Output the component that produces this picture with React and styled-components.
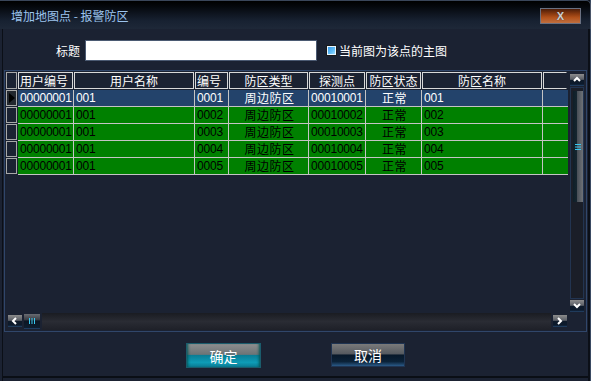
import React from 'react';
import styled, { createGlobalStyle } from 'styled-components';

const GlobalStyle = createGlobalStyle`
	html, body {
		margin: 0;
		padding: 0;
		background: #1b2232;
	}
	* {
		box-sizing: border-box;
	}
`;

const CJK = `"Noto Sans CJK SC", "Noto Sans", sans-serif`;
const LATIN = `"Liberation Sans", "Noto Sans CJK SC", sans-serif`;

const Window = styled.div`
	width: 591px;
	height: 381px;
	display: flex;
	flex-direction: column;
	background: #1b2232;
	font-family: ${CJK};
	font-size: 12px;
	color: #fff;
	box-shadow: inset 2px 0 0 #1b2232, inset 3px 0 0 #0b0f17, inset -1px 0 0 #3a4a62, inset -3px 0 0 #0b0f17,
		inset 0 -3px 0 #1b2232, inset 0 -5px 0 #0a0e15;
	overflow: hidden;
`;

const TitleBar = styled.div`
	height: 29px;
	flex: none;
	display: flex;
	align-items: flex-start;
	justify-content: space-between;
	padding: 0 9px 0 11px;
	background: linear-gradient(#000 0%, #05080d 20%, #172131 70%, #1e2838 100%);
	border-top: 1px solid #3a465a;
	border-right: 1px solid #4a5568;
	border-top-right-radius: 5px;
`;

const Title = styled.span`
	margin-top: 7px;
	font-size: 12px;
	line-height: 16px;
	color: #9cc4ee;
	white-space: nowrap;
`;

const CloseButton = styled.button`
	margin-top: 7px;
	width: 41px;
	height: 16px;
	padding: 0;
	border: 1px solid #6a7080;
	background: linear-gradient(#4a1c08 0%, #8a3a10 35%, #b0501a 60%, #c07040 100%);
	color: #d0d0d0;
	font-family: ${LATIN};
	font-weight: bold;
	font-size: 11px;
	line-height: 14px;
	text-shadow: 0 0 1px #333;
`;

const Content = styled.div`
	flex: 1;
	display: flex;
	flex-direction: column;
`;

const FormRow = styled.div`
	margin-top: 11px;
	height: 21px;
	display: flex;
	align-items: center;
	padding-left: 56px;
`;

const FieldLabel = styled.span`
	width: 29px;
	line-height: 16px;
	white-space: nowrap;
`;

const TextInput = styled.input`
	width: 232px;
	height: 21px;
	border: 1px solid #4b5a72;
	background: #fff;
	margin: 0 9px 0 0;
	padding: 0 3px;
`;

const CheckLabel = styled.label`
	display: flex;
	align-items: center;
	gap: 2px;
	white-space: nowrap;
	line-height: 16px;
`;

const CheckBox = styled.span`
	width: 11px;
	height: 11px;
	border: 1px solid #1a1a1a;
	box-shadow: inset 0 0 0 1px #e8f6ff;
	background: linear-gradient(135deg, #2f8fe8 0%, #62c0f8 60%, #b8e8ff 100%);
`;

const Grid = styled.div`
	margin: 9px 0 0 4px;
	width: 583px;
	height: 262px;
	border: 1px solid #30466a;
	padding: 1px;
	display: grid;
	grid-template-columns: 562px 1fr;
	grid-template-rows: 1fr 18px;
`;

const Table = styled.div`
	display: flex;
	flex-direction: column;
`;

const Row = styled.div`
	display: flex;
	height: 17px;
	margin-bottom: ${(p) => (p.$header ? '1px' : '0')};
`;

const Indicator = styled.div`
	width: 12px;
	flex: none;
	padding-right: 1px;
	padding-bottom: ${(p) => (p.$header ? '0' : '1px')};
	display: flex;
	& > span {
		flex: 1;
		border: 1px solid #a8a8a8;
		background: ${(p) => (p.$active ? '#22272e' : '#1b2232')};
		display: flex;
		align-items: center;
		justify-content: center;
	}
`;

const HeadCell = styled.div`
	width: ${(p) => p.$w}px;
	flex: none;
	padding-right: 1px;
	display: flex;
	& > span {
		flex: 1;
		border: 1px solid #d8d8d8;
		border-right-color: ${(p) => (p.$open ? 'transparent' : '#d8d8d8')};
		font-size: 12px;
		line-height: 15px;
		text-align: ${(p) => p.$align};
		padding: 0 1px;
		white-space: nowrap;
		overflow: hidden;
	}
`;

const Cell = styled.div`
	width: ${(p) => p.$w}px;
	flex: none;
	background: ${(p) => p.$bg};
	color: ${(p) => p.$color};
	border-right: ${(p) => (p.$last ? '0' : '1px solid #c4c4c4')};
	border-bottom: 1px solid #c4c4c4;
	font-family: ${(p) => (p.$cjk ? CJK : LATIN)};
	font-size: 12px;
	line-height: 16px;
	letter-spacing: ${(p) => (p.$cjk ? '0.5px' : '-0.2px')};
	text-align: ${(p) => p.$align};
	padding: 0 0 0 2px;
	white-space: nowrap;
	overflow: hidden;
`;

const VScroll = styled.div`
	margin: 2px 1px 0 2px;
	display: flex;
	flex-direction: column;
`;

const ScrollBtn = styled.div`
	width: ${(p) => p.$w || 14}px;
	height: 12px;
	flex: none;
	display: flex;
	align-items: center;
	justify-content: center;
	background: linear-gradient(#8c8c8c 0%, #5a5e66 45%, #0e1a2a 50%, #0c1a2c 85%, #27486e 100%);
`;

const VTrack = styled.div`
	flex: 1;
	margin: 1px 0;
	border: 1px solid #223450;
	background: #1a1e28;
	padding: 3px 0 0 2px;
`;

const VThumb = styled.div`
	height: 111px;
	display: flex;
	align-items: center;
	justify-content: center;
	background: linear-gradient(90deg, #0e1e28 0%, #14242e 35%, #4a5058 45%, #6e7278 100%);
`;

const HScroll = styled.div`
	display: flex;
	align-items: center;
	padding: 0 1px 0 2px;
	gap: 2px;
`;

const HThumb = styled.div`
	width: 16px;
	height: 15px;
	display: flex;
	align-items: center;
	justify-content: center;
	background: linear-gradient(#6a6c72 0%, #3a3e46 40%, #0c1624 50%, #0e1e30 100%);
	border-bottom: 1px solid #1f3c60;
`;

const HTrack = styled.div`
	flex: 1;
	height: 17px;
	background: linear-gradient(#1a1c22 0%, #2a2c34 50%, #1e2028 100%);
`;

const Footer = styled.div`
	margin-top: 11px;
	display: flex;
	align-items: flex-start;
	padding-left: 186px;
	gap: 70px;
`;

const DialogButton = styled.button`
	width: ${(p) => p.$w}px;
	height: ${(p) => p.$h}px;
	padding: 0;
	font-family: ${CJK};
	font-size: 14px;
	line-height: 18px;
	color: #fff;
	border: 1px solid ${(p) => (p.$primary ? '#1b5c6c' : '#1f3452')};
	background: ${(p) =>
		p.$primary
			? 'linear-gradient(#8e8e8e 0%, #6c7476 45%, #0a7e96 50%, #0e9cb6 80%, #0a7a92 100%)'
			: 'linear-gradient(#7a7a7a 0%, #555a60 45%, #07182a 50%, #0b2238 80%, #2a5a88 100%)'};
	box-shadow: ${(p) => (p.$primary ? 'inset 3px 0 3px -2px #055, inset -3px 0 3px -2px #055' : 'none')};
`;

function Chevron({ dir }) {
	const pts = {
		up: '1,5 4,2 7,5',
		down: '1,2 4,5 7,2',
		left: '5,1 2,4 5,7',
		right: '2,1 5,4 2,7',
	}[dir];
	return (
		<svg width="8" height="8" viewBox="0 0 8 8">
			<polyline points={pts} fill="none" stroke="#fff" strokeWidth="2" />
		</svg>
	);
}

function Grip({ vertical }) {
	return vertical ? (
		<svg width="6" height="6" viewBox="0 0 6 6">
			<rect x="0" y="0" width="6" height="1" fill="#38c8f0" />
			<rect x="0" y="2.5" width="6" height="1" fill="#38c8f0" />
			<rect x="0" y="5" width="6" height="1" fill="#38c8f0" />
		</svg>
	) : (
		<svg width="6" height="6" viewBox="0 0 6 6">
			<rect x="0" y="0" width="1" height="6" fill="#38c8f0" />
			<rect x="2.5" y="0" width="1" height="6" fill="#38c8f0" />
			<rect x="5" y="0" width="1" height="6" fill="#38c8f0" />
		</svg>
	);
}

const columns = [
	{ key: 'uid', title: '用户编号', w: 56, head: 'left', align: 'left' },
	{ key: 'uname', title: '用户名称', w: 121, head: 'center', align: 'left' },
	{ key: 'no', title: '编号', w: 34, head: 'left', align: 'left' },
	{ key: 'type', title: '防区类型', w: 80, head: 'center', align: 'center', cjk: true },
	{ key: 'point', title: '探测点', w: 57, head: 'center', align: 'left' },
	{ key: 'state', title: '防区状态', w: 56, head: 'center', align: 'center', cjk: true },
	{ key: 'name', title: '防区名称', w: 121, head: 'center', align: 'left' },
	{ key: 'blank', title: '', w: 25, head: 'center', align: 'left', open: true },
];

const rows = [1, 2, 3, 4, 5].map((n) => ({
	uid: '00000001',
	uname: '001',
	no: `000${n}`,
	type: '周边防区',
	point: `0001000${n}`,
	state: '正常',
	name: `00${n}`,
	blank: '',
}));

export default function App() {
	return (
		<>
			<GlobalStyle />
			<Window>
				<TitleBar>
					<Title>增加地图点 - 报警防区</Title>
					<CloseButton>X</CloseButton>
				</TitleBar>
				<Content>
					<FormRow>
						<FieldLabel>标题</FieldLabel>
						<TextInput />
						<CheckLabel>
							<CheckBox />
							当前图为该点的主图
						</CheckLabel>
					</FormRow>
					<Grid>
						<Table>
							<Row $header>
								<Indicator $header>
									<span />
								</Indicator>
								{columns.map((c) => (
									<HeadCell key={c.key} $w={c.w} $align={c.head} $open={c.open}>
										<span>{c.title}</span>
									</HeadCell>
								))}
							</Row>
							{rows.map((r, i) => {
								const selected = i === 0;
								return (
									<Row key={i}>
										<Indicator $active={selected}>
											<span>
												{selected && (
													<svg width="6" height="10" viewBox="0 0 6 10">
														<polygon points="0,0 6,5 0,10" fill="#000" />
													</svg>
												)}
											</span>
										</Indicator>
										{columns.map((c, j) => (
											<Cell
												key={c.key}
												$w={c.w}
												$align={c.align}
												$cjk={c.cjk}
												$last={j === columns.length - 1}
												$bg={selected ? '#23436b' : '#008000'}
												$color={selected ? '#fff' : '#000'}
											>
												{r[c.key]}
											</Cell>
										))}
									</Row>
								);
							})}
						</Table>
						<VScroll>
							<ScrollBtn>
								<Chevron dir="up" />
							</ScrollBtn>
							<VTrack>
								<VThumb>
									<Grip vertical />
								</VThumb>
							</VTrack>
							<ScrollBtn>
								<Chevron dir="down" />
							</ScrollBtn>
						</VScroll>
						<HScroll>
							<ScrollBtn>
								<Chevron dir="left" />
							</ScrollBtn>
							<HThumb>
								<Grip />
							</HThumb>
							<HTrack />
							<ScrollBtn>
								<Chevron dir="right" />
							</ScrollBtn>
						</HScroll>
						<div />
					</Grid>
					<Footer>
						<DialogButton $primary $w={75} $h={25}>
							确定
						</DialogButton>
						<DialogButton $w={74} $h={24}>
							取消
						</DialogButton>
					</Footer>
				</Content>
			</Window>
		</>
	);
}
